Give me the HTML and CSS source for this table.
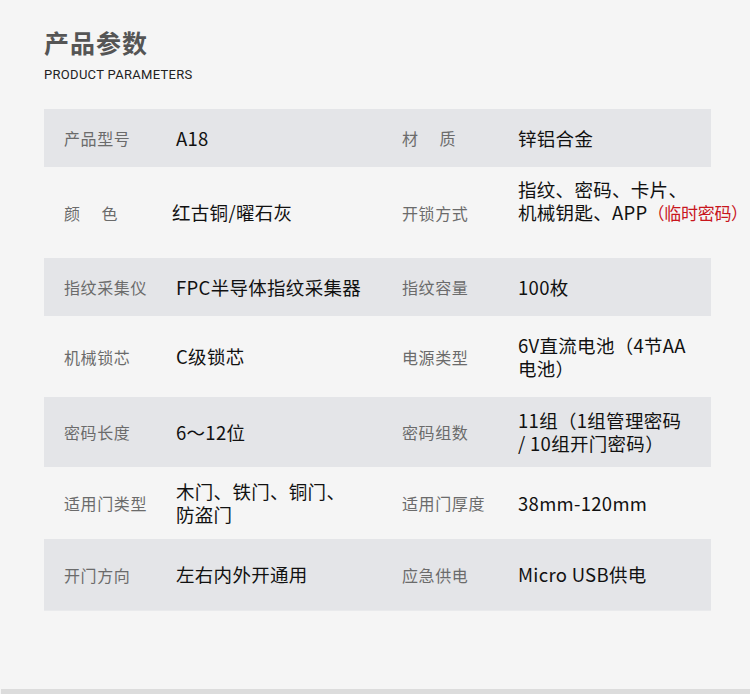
FILE: index.html
```html
<!DOCTYPE html>
<html lang="zh-CN">
<head>
<meta charset="utf-8">
<title>产品参数</title>
<link rel="stylesheet" href="styles.css">
</head>
<body>
<div class="page">
  <header class="head">
    <h1 class="title">产品参数</h1>
    <p class="subtitle">PRODUCT PARAMETERS</p>
  </header>
  <div class="table">
    <div class="row shade">
      <div class="label">产品型号</div><div class="value">A18</div>
      <div class="label">材&nbsp;&nbsp;&nbsp;&nbsp;&nbsp;质</div><div class="value">锌铝合金</div>
    </div>
    <div class="row">
      <div class="label">颜&nbsp;&nbsp;&nbsp;&nbsp;&nbsp;色</div><div class="value shift-left">红古铜/曜石灰</div>
      <div class="label">开锁方式</div><div class="value raised nowrap">指纹、密码、卡片、<br>机械钥匙、APP<span class="red">（临时密码）</span></div>
    </div>
    <div class="row shade">
      <div class="label">指纹采集仪</div><div class="value">FPC半导体指纹采集器</div>
      <div class="label">指纹容量</div><div class="value">100枚</div>
    </div>
    <div class="row">
      <div class="label">机械锁芯</div><div class="value">C级锁芯</div>
      <div class="label">电源类型</div><div class="value">6V直流电池（4节AA<br>电池）</div>
    </div>
    <div class="row shade">
      <div class="label">密码长度</div><div class="value">6～12位</div>
      <div class="label">密码组数</div><div class="value">11组（1组管理密码<br>/ 10组开门密码）</div>
    </div>
    <div class="row">
      <div class="label">适用门类型</div><div class="value">木门、铁门、铜门、<br>防盗门</div>
      <div class="label">适用门厚度</div><div class="value">38mm-120mm</div>
    </div>
    <div class="row shade">
      <div class="label">开门方向</div><div class="value">左右内外开通用</div>
      <div class="label">应急供电</div><div class="value">Micro USB供电</div>
    </div>
  </div>
</div>
<div class="bottom-bar"></div>
</body>
</html>
```
FILE: styles.css
```css
html, body {
  margin: 0;
  padding: 0;
}
body {
  width: 750px;
  height: 694px;
  background: #f5f5f5;
  font-family: "Noto Sans CJK SC", "Noto Sans", sans-serif;
  overflow: hidden;
  display: flex;
  flex-direction: column;
}
.page {
  flex: 1;
  padding: 0 39px 0 44px;
  min-width: 0;
}
.head {
  padding-top: 25px;
}
.title {
  margin: 0;
  font-size: 25px;
  line-height: 34px;
  font-weight: 700;
  color: #555555;
  letter-spacing: 1px;
}
.subtitle {
  margin: 8px 0 0 0;
  font-family: Roboto, "Liberation Sans", sans-serif;
  font-size: 13px;
  line-height: 15px;
  color: #222222;
  letter-spacing: 0.3px;
}
.table {
  margin-top: 27px;
  display: grid;
  grid-template-rows: 58px 91px 58px 81px 70px 72px 71px;
  grid-template-columns: minmax(0, 1fr);
  border-bottom: 1px solid #e9eaec;
}
.row {
  display: grid;
  grid-template-columns: 112px 226px 116px minmax(0, 1fr);
  align-items: center;
  padding-left: 20px;
}
.shade {
  background: #e4e5e8;
}
.label {
  font-size: 16px;
  line-height: 22px;
  color: #6b6b6b;
  letter-spacing: 0.6px;
  white-space: pre;
}
.value {
  font-size: 18.5px;
  line-height: 23px;
  font-weight: 400;
  color: #111111;
  letter-spacing: 0.3px;
}
.shift-left {
  margin-left: -4px;
}
.raised {
  align-self: start;
  padding-top: 11px;
}
.nowrap {
  white-space: nowrap;
}
.red {
  color: #c8161d;
  font-size: 17px;
  letter-spacing: -0.3px;
}
.bottom-bar {
  height: 5px;
  background: #dcdcdc;
  margin-left: 1px;
}
```
